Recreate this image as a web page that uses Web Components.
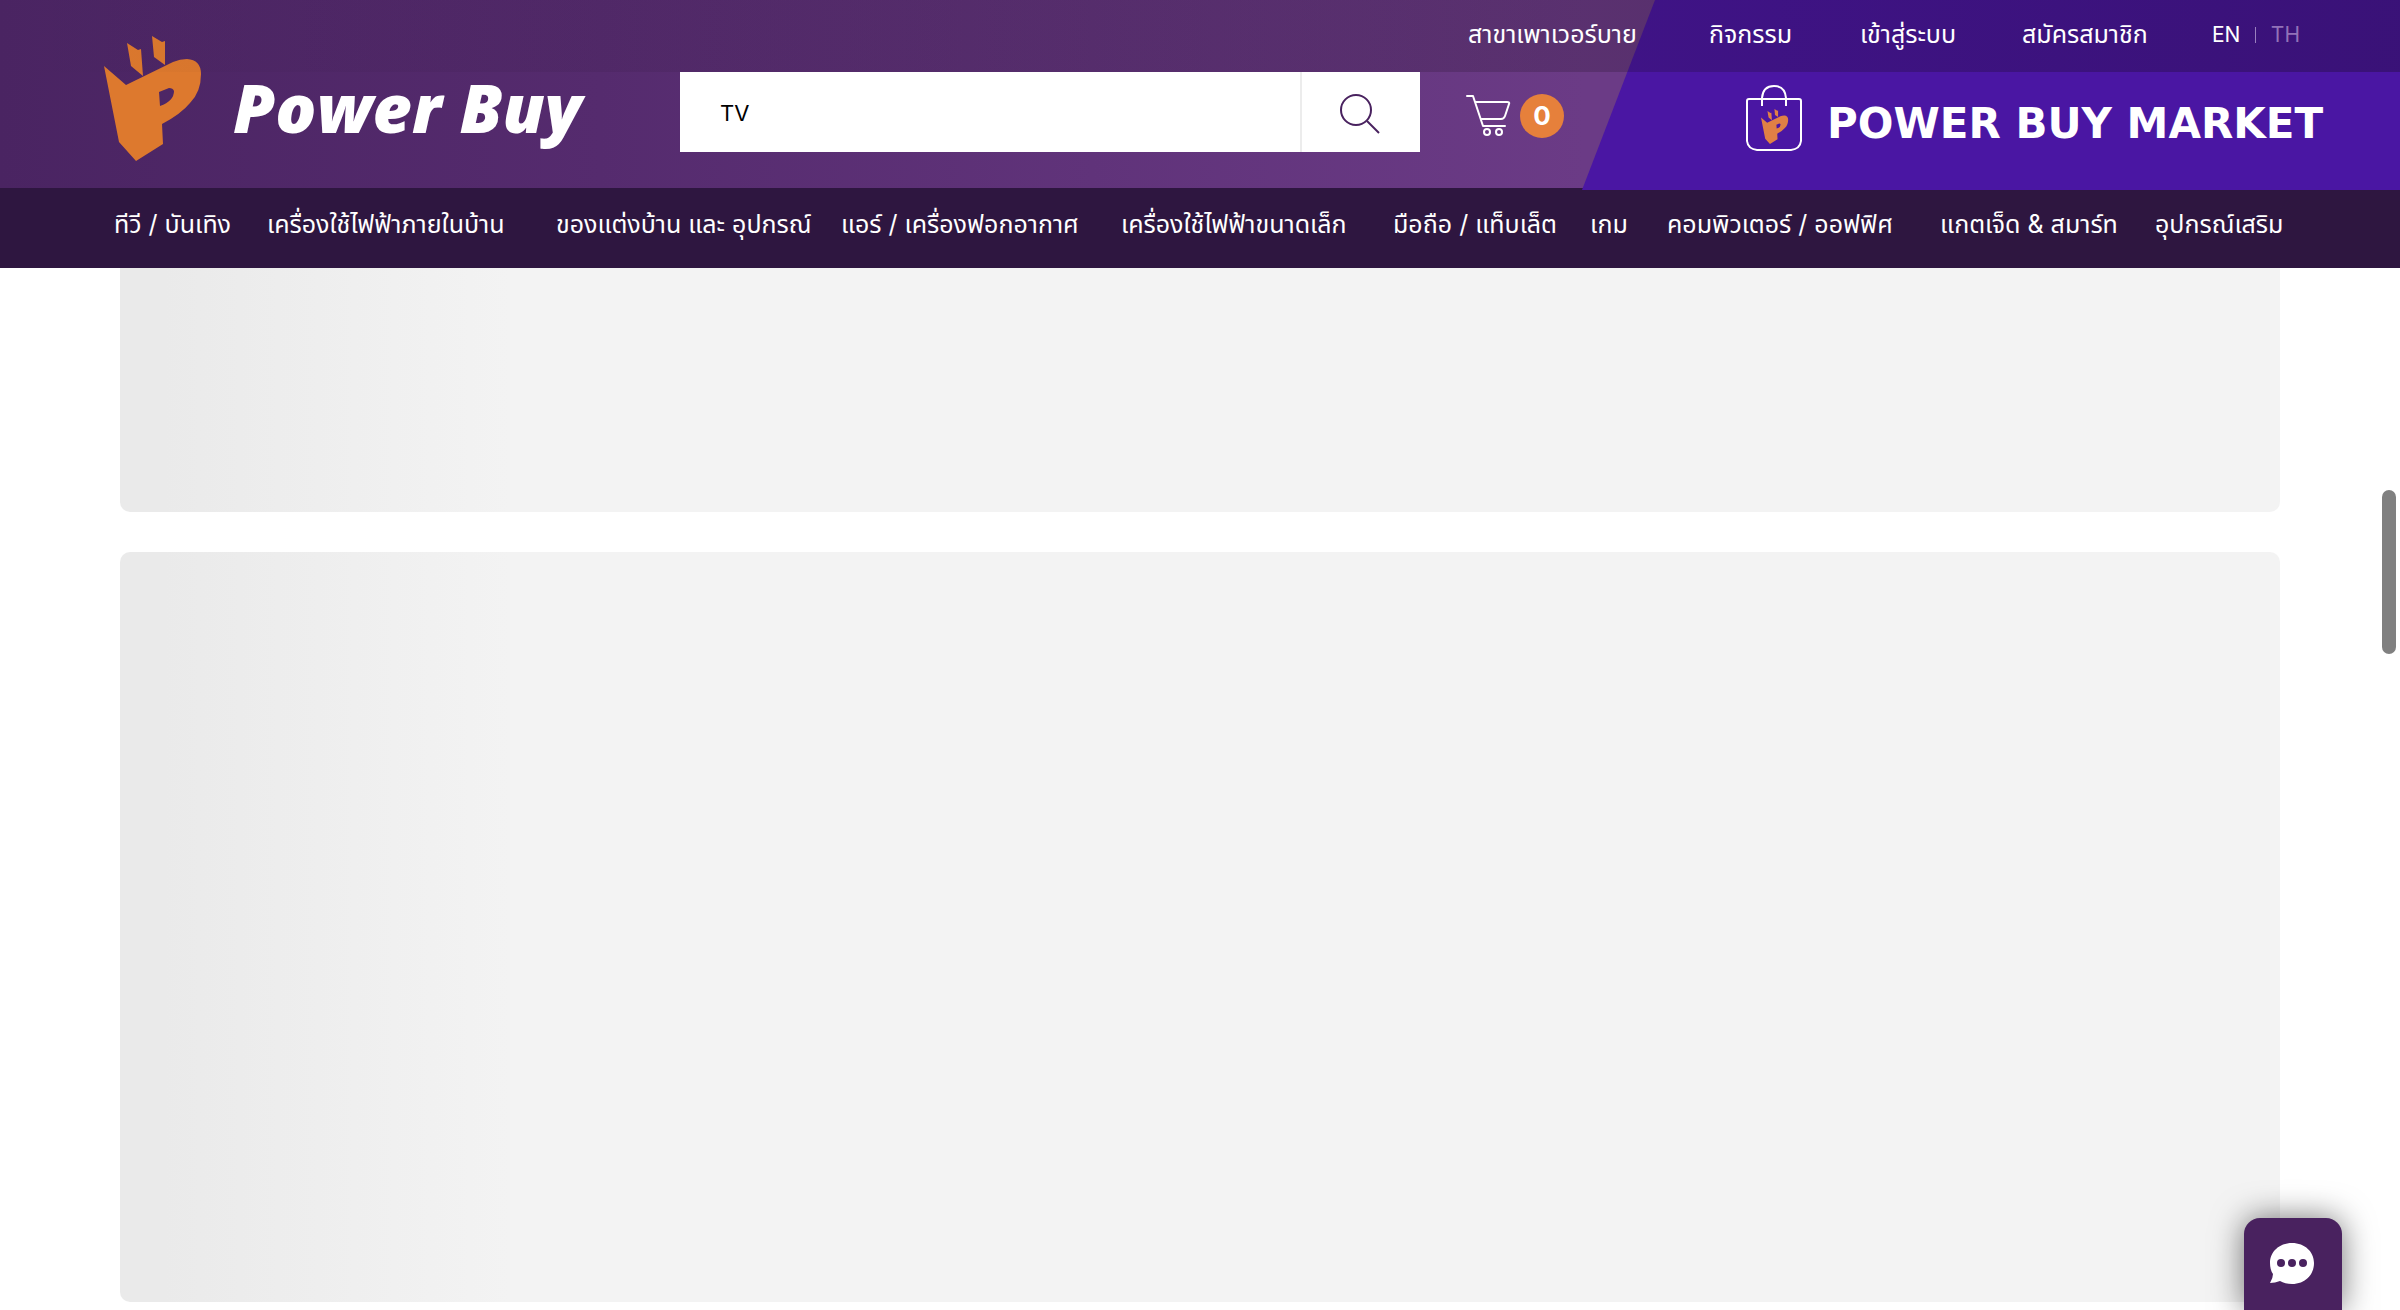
<!DOCTYPE html>
<html lang="th">
<head>
<meta charset="utf-8">
<title>Power Buy</title>
<style>
html, body { margin: 0; height: 100%; }
body { background: #fff; overflow: hidden; font-family: Inter, "Noto Sans Thai", "Noto Sans", sans-serif; color: #fff; }
</style>
</head>
<body>
<pb-page></pb-page>
<script>
const define = (name, html, setup) => {
  const template = document.createElement('template');
  template.innerHTML = html;
  customElements.define(name, class extends HTMLElement {
    constructor() {
      super();
      this.attachShadow({ mode: 'open' }).append(template.content.cloneNode(true));
    }
    connectedCallback() { if (setup) setup(this, this.shadowRoot); }
  });
};

const PLUG = `
  <path fill-rule="evenodd" d="M0 30 L22 49 L69 26 Q76 23 83 23 Q97 24 97 38 Q97 56 86 67 Q77 78 58 88 L59 108 L32 125 L15 106 Z M55 56 L56 70 Q70 65 70 55 Q69 52 65 52 Z"/>
  <path d="M23 7 L34 14 L37 13 L39 40 L27 30 Z M48 0 L58 6 L61 5 L61 29 L50 21 Z"/>`;

define('pb-logo', `
<style>
:host { display: block; }
a { display: flex; align-items: flex-start; gap: 32px; color: inherit; text-decoration: none; }
svg { display: block; width: 97px; height: 126px; fill: #dd792e; }
span { padding-top: 37px; font: italic 900 68px/68px "Open Sans", sans-serif; white-space: nowrap; }
</style>
<a href="#"><svg viewBox="0 0 97 126" aria-hidden="true">${PLUG}</svg><span>Power Buy</span></a>`);

define('pb-search', `
<style>
:host { display: block; }
form { display: flex; height: 80px; background: #fff; }
input { flex: 1; min-width: 0; border: 0; padding: 2px 40px 0; background: none; font: 22px/24px Inter, sans-serif; color: #000; outline: 0; }
button { width: 120px; border: 0; border-left: 2px solid #ececec; padding: 4px 2px 0 0; background: none; display: grid; place-items: center; }
svg { width: 40px; height: 40px; fill: none; stroke: #49225f; stroke-width: 2; }
</style>
<form>
  <input type="text" value="TV" aria-label="ค้นหา">
  <button type="button" aria-label="ค้นหา"><svg viewBox="0 0 40 40"><circle cx="16" cy="16" r="15"/><path d="M27 27 L39 39"/></svg></button>
</form>`);

define('pb-cart', `
<style>
:host { display: block; }
a { display: flex; align-items: center; gap: 9px; color: inherit; text-decoration: none; }
svg { width: 45px; height: 44px; fill: none; stroke: #fff; stroke-width: 2; stroke-linejoin: round; stroke-linecap: round; }
b { width: 44px; height: 44px; border-radius: 50%; background: #e6803b; font: 700 26px/44px Inter, sans-serif; text-align: center; }
</style>
<a href="#" aria-label="ตะกร้าสินค้า">
  <svg viewBox="0 0 45 44"><path d="M1 2 H7 L17 32 H39 M9 8 H41 Q44 8 43 10 L39 22 Q38 25 35 25 H15"/><circle cx="21" cy="38" r="3"/><circle cx="33" cy="38" r="3"/></svg>
  <b><slot></slot></b>
</a>`);

define('pb-market', `
<style>
:host { display: block; background: #4a16a3; clip-path: polygon(73px 0, 100% 0, 100% 100%, 0 100%); }
a { display: flex; align-items: flex-start; gap: 24px; padding: 84px 0 0 163px; color: inherit; text-decoration: none; }
svg { width: 58px; height: 68px; fill: none; stroke: #fff; stroke-width: 2; }
.plug { fill: #e08045; stroke: none; }
span { padding-top: 16px; font: 700 42px/48px "DejaVu Sans", sans-serif; white-space: nowrap; }
</style>
<a href="#">
  <svg viewBox="0 0 58 68" aria-hidden="true">
    <path d="M4 15 H54 Q56 15 56 17 V57 Q55 65 46 66 H12 Q3 65 2 57 V17 Q2 15 4 15 Z"/>
    <path d="M17 22 V14 Q18 2 29 2 Q40 2 41 14 V22"/>
    <g class="plug" transform="translate(16 25) scale(.28)">${PLUG}</g>
  </svg>
  <span><slot></slot></span>
</a>`);

define('pb-toplinks', `
<style>
:host { display: block; background: linear-gradient(90deg, rgba(20,8,20,0), rgba(20,8,20,.3)); }
nav { display: grid; grid-template-columns: 241px 151px 162px 190px 88px; justify-content: end; padding: 0 100px 4px 0; height: 68px; align-items: center; }
a { color: inherit; text-decoration: none; font-size: 25px; line-height: 32px; white-space: nowrap; }
.lang { display: flex; justify-content: space-between; align-items: center; padding-top: 2px; }
.lang a { font-size: 21px; }
.lang i { width: 1px; height: 16px; background: #9a80bf; }
.lang .off { color: #9272b8; }
</style>
<nav>
  <a href="#">สาขาเพาเวอร์บาย</a><a href="#">กิจกรรม</a><a href="#">เข้าสู่ระบบ</a><a href="#">สมัครสมาชิก</a>
  <div class="lang"><a href="#">EN</a><i></i><a href="#" class="off">TH</a></div>
</nav>`);

define('pb-nav', `
<style>
:host { display: block; background: #2e1640; }
nav { display: grid; grid-template-columns: 153fr 289fr 285fr 280fr 272fr 197fr 77fr 273fr 215fr 131fr; align-items: center; height: 80px; padding: 0 114px; }
a { color: inherit; text-decoration: none; font-size: 25px; line-height: 32px; white-space: nowrap; padding-bottom: 8px; min-width: 0; }
</style>
<nav></nav>`, (host, root) => {
  const nav = root.querySelector('nav');
  nav.replaceChildren(...['ทีวี / บันเทิง', 'เครื่องใช้ไฟฟ้าภายในบ้าน', 'ของแต่งบ้าน และ อุปกรณ์', 'แอร์ / เครื่องฟอกอากาศ', 'เครื่องใช้ไฟฟ้าขนาดเล็ก', 'มือถือ / แท็บเล็ต', 'เกม', 'คอมพิวเตอร์ / ออฟฟิศ', 'แกตเจ็ด & สมาร์ท', 'อุปกรณ์เสริม'].map(t => {
    const a = document.createElement('a');
    a.href = '#';
    a.textContent = t;
    return a;
  }));
});

define('pb-header', `
<style>
:host { display: block; }
.main { display: grid; grid-template: 72px 116px / 680px minmax(0, 1fr) 162px 818px; background: linear-gradient(90deg, #4a2462 0, #552b6e 25%, #6b3b86 66%); }
pb-logo { grid-area: 1 / 1 / 3 / 2; padding: 36px 0 0 104px; }
pb-search { grid-area: 2 / 2; }
pb-cart { grid-area: 2 / 3; padding: 22px 0 0 46px; }
pb-market { grid-area: 1 / 4 / 3 / 5; margin-bottom: -2px; z-index: 1; }
pb-toplinks { grid-area: 1 / 1 / 2 / 5; z-index: 2; }
</style>
<div class="main">
  <pb-logo></pb-logo>
  <pb-search></pb-search>
  <pb-cart>0</pb-cart>
  <pb-market>POWER BUY MARKET</pb-market>
  <pb-toplinks></pb-toplinks>
</div>
<pb-nav></pb-nav>`);

define('pb-skeleton', `
<style>
:host { display: block; border-radius: 10px; background: linear-gradient(90deg, #eaeaea 2%, #f3f3f3 18%); }
</style>`);

define('pb-chat', `
<style>
:host { display: block; }
button { display: grid; justify-items: start; width: 98px; height: 92px; padding: 25px 0 0 26px; align-content: start; border: 0; border-radius: 16px 16px 0 0; background: #49225f; box-shadow: 0 0 32px rgba(0,0,0,.55); }
svg { width: 44px; height: 42px; fill: #fff; }
circle { fill: #49225f; }
</style>
<button type="button" aria-label="แชท"><svg viewBox="0 0 44 42"><path d="M22 0 C35 0 44 9 44 20 C44 32 35 41 22 41 Q15 41 10 38 Q5 40 0 40 Q3 35 3 31 Q0 27 0 20 C0 9 9 0 22 0 Z"/><circle cx="11" cy="20" r="4"/><circle cx="22" cy="20" r="4"/><circle cx="33" cy="20" r="4"/></svg></button>`);

define('pb-page', `
<style>
:host { display: block; }
main { display: grid; gap: 40px; padding: 0 120px; }
pb-skeleton { height: 750px; }
pb-skeleton:first-child { height: 244px; border-radius: 0 0 10px 10px; }
pb-chat { position: fixed; right: 58px; bottom: 0; }
.thumb { position: fixed; right: 4px; top: 490px; width: 14px; height: 164px; border-radius: 7px; background: #808080; }
</style>
<pb-header></pb-header>
<main><pb-skeleton></pb-skeleton><pb-skeleton></pb-skeleton></main>
<pb-chat></pb-chat>
<div class="thumb"></div>`);
</script>
</body>
</html>
